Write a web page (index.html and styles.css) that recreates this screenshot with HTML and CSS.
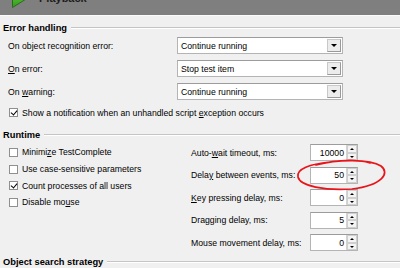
FILE: index.html
```html
<!DOCTYPE html>
<html>
<head>
<meta charset="utf-8">
<link rel="stylesheet" href="styles.css">
</head>
<body>
<div class="header">
  <svg class="play" width="18" height="9" viewBox="0 0 18 9">
    <defs>
      <linearGradient id="g" x1="0" y1="0" x2="0" y2="1">
        <stop offset="0" stop-color="#7fdc4a"/>
        <stop offset="1" stop-color="#2f9a1c"/>
      </linearGradient>
    </defs>
    <polygon points="1.5,-14 1.5,7.5 19,-3.5" fill="url(#g)" stroke="#2b6b1c" stroke-width="1"/>
  </svg>
  <span class="title">Playback</span>
</div>

<section class="group eh">
  <div class="legend"><span>Error handling</span><i class="rule"></i></div>
  <div class="combos">
    <div class="row"><span class="lbl">On object recognition error:</span><div class="combo"><span>Continue running</span><b class="drop"></b></div></div>
    <div class="row"><span class="lbl"><u>O</u>n error:</span><div class="combo"><span>Stop test item</span><b class="drop"></b></div></div>
    <div class="row"><span class="lbl">On <u>w</u>arning:</span><div class="combo"><span>Continue running</span><b class="drop"></b></div></div>
  </div>
  <div class="check notify"><i class="box on"></i><span>Show a notification when an unhandled script <u>e</u>xception occurs</span></div>
</section>

<section class="group rt">
  <div class="legend"><span>Runtime</span><i class="rule"></i></div>
  <div class="cols">
    <div class="checks">
      <div class="check"><i class="box"></i><span>Minimi<u>z</u>e TestComplete</span></div>
      <div class="check"><i class="box"></i><span>Use case-sensitive parameters</span></div>
      <div class="check"><i class="box on"></i><span>Count processes of all users</span></div>
      <div class="check"><i class="box"></i><span>Disable mo<u>u</u>se</span></div>
    </div>
    <div class="spins">
      <div class="srow"><span class="lbl">Auto-<u>w</u>ait timeout, ms:</span><div class="spin"><span>10000</span><b class="arrows"><i class="up"></i><i class="dn"></i></b></div></div>
      <div class="srow"><span class="lbl">Dela<u>y</u> between events, ms:</span><div class="spin"><span>50</span><b class="arrows"><i class="up"></i><i class="dn"></i></b></div></div>
      <div class="srow"><span class="lbl"><u>K</u>ey pressing delay, ms:</span><div class="spin"><span>0</span><b class="arrows"><i class="up"></i><i class="dn"></i></b></div></div>
      <div class="srow"><span class="lbl">Dragging delay, ms:</span><div class="spin"><span>5</span><b class="arrows"><i class="up"></i><i class="dn"></i></b></div></div>
      <div class="srow"><span class="lbl">Mouse movement delay, ms:</span><div class="spin"><span>0</span><b class="arrows"><i class="up"></i><i class="dn"></i></b></div></div>
    </div>
  </div>
</section>

<section class="group os">
  <div class="legend"><span>Object search strategy</span><i class="rule"></i></div>
</section>

<svg class="mark" width="400" height="268" viewBox="0 0 400 268">
  <path d="M 316 165 C 338 159, 370 159, 381 166 C 390 173, 383 185, 352 189 C 325 191, 300 186, 298 177 C 296 169, 310 164, 330 162 C 345 160, 360 160, 370 163" fill="none" stroke="#e8141a" stroke-width="1.7" stroke-linecap="round"/>
</svg>
</body>
</html>
```

FILE: styles.css
```css
* { box-sizing: border-box; }
html, body {
  margin: 0;
  padding: 0;
  width: 400px;
  height: 268px;
  overflow: hidden;
  background: #f0f0f0;
}
body {
  font-family: "Liberation Sans", Arial, sans-serif;
  font-size: 8.7px;
  color: #000;
  position: relative;
}
u { text-decoration: underline; text-underline-offset: 1px; }

.header {
  height: 16px;
  flex: none;
  background: #7f7f7f;
  border-bottom: 1px solid #fbfbfb;
  display: flex;
  align-items: flex-start;
  overflow: hidden;
}
.play { margin-left: 11px; display: block; flex: none; }
.title {
  margin-left: 10px;
  margin-top: -7px;
  font-weight: bold;
  font-size: 11px;
  line-height: 11px;
  color: #1e1e1e;
}

.legend {
  display: flex;
  align-items: center;
  height: 11px;
  padding-left: 3px;
  font-weight: bold;
  font-size: 9.3px;
}
.legend span { white-space: nowrap; }
.rule {
  flex: 1;
  margin-left: 4px;
  height: 2px;
  border-top: 1px solid #c5c5c5;
  border-bottom: 1px solid #ffffff;
}

.eh { padding-top: 6px; }
.combos {
  margin-top: 4px;
  display: flex;
  flex-direction: column;
  gap: 6px;
}
.row {
  display: flex;
  align-items: center;
  height: 17px;
  padding-left: 8px;
}
.row .lbl { width: 169px; }
.combo {
  width: 166px;
  height: 17px;
  background: #fff;
  border: 1px solid #b4b4b4;
  border-top-color: #9c9c9c;
  display: flex;
  align-items: center;
  justify-content: space-between;
  padding: 1px 1px 1px 3px;
}
.drop {
  width: 14px;
  height: 13px;
  background: #ececec;
  border: 1px solid #c8c8c8;
  border-right-color: #9a9a9a;
  border-bottom-color: #9a9a9a;
  position: relative;
}
.drop::after {
  content: "";
  position: absolute;
  left: 3px;
  top: 4px;
  border-left: 3px solid transparent;
  border-right: 3px solid transparent;
  border-top: 3px solid #000;
}

.check {
  display: flex;
  align-items: center;
  gap: 4px;
  padding-left: 9px;
  height: 16.7px;
}
.notify { margin-top: 6px; height: 13px; }
.box {
  width: 9px;
  height: 9px;
  background: #fff;
  border: 1px solid #8f8f8f;
  position: relative;
  flex: none;
}
.box.on::after {
  content: "";
  position: absolute;
  left: 2px;
  top: 0px;
  width: 3px;
  height: 5px;
  border-right: 1.5px solid #000;
  border-bottom: 1.5px solid #000;
  transform: rotate(40deg);
}

.rt { padding-top: 10px; }
.cols {
  display: flex;
  margin-top: 4px;
}
.checks { width: 191px; display: flex; flex-direction: column; }
.spins { display: flex; flex-direction: column; gap: 5.5px; }
.srow {
  display: flex;
  align-items: center;
  height: 17px;
}
.srow .lbl { width: 119px; }
.spin {
  width: 48px;
  height: 17px;
  background: #fff;
  border: 1px solid #b4b4b4;
  border-top-color: #9c9c9c;
  display: flex;
  align-items: center;
}
.spin span { flex: 1; text-align: right; padding-right: 2px; }
.arrows {
  width: 11px;
  height: 15px;
  display: flex;
  flex-direction: column;
  border-left: 1px solid #d4d4d4;
  background: #f4f4f4;
}
.arrows i {
  flex: 1;
  position: relative;
  border: 1px solid #cfcfcf;
}
.arrows i::after {
  content: "";
  position: absolute;
  left: 2px;
  border-left: 2.5px solid transparent;
  border-right: 2.5px solid transparent;
}
.arrows .up::after { top: 2px; border-bottom: 2.5px solid #000; }
.arrows .dn::after { top: 2px; border-top: 2.5px solid #000; }

.os { padding-top: 5.5px; }

.mark {
  position: absolute;
  left: 0;
  top: 0;
  pointer-events: none;
}
```
